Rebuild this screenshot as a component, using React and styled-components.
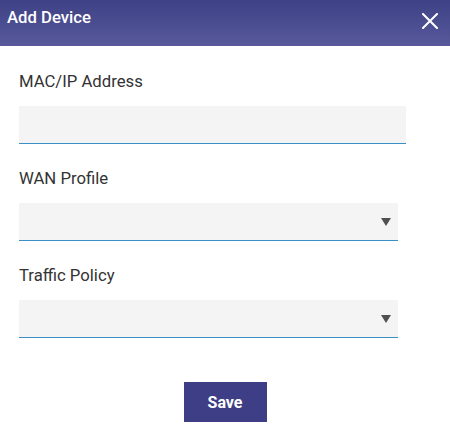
import styled, { createGlobalStyle } from "styled-components";

const GlobalStyle = createGlobalStyle`
  body {
    margin: 0;
    background: #fff;
    font-family: Roboto, "Liberation Sans", sans-serif;
  }
`;

function CloseIcon() {
  return (
    <svg width="16" height="16" viewBox="0 0 16 16">
      <path
        d="M1 1L15 15M15 1L1 15"
        stroke="#fff"
        strokeWidth="2"
        strokeLinecap="square"
      />
    </svg>
  );
}

function Field({ label, select, width }) {
  return (
    <Styled.Field>
      <Styled.Label>{label}</Styled.Label>
      <Styled.Control $width={width}>
        {select && <Styled.Caret />}
      </Styled.Control>
    </Styled.Field>
  );
}

export default function App() {
  return (
    <>
      <GlobalStyle />
      <Styled.Dialog>
        <Styled.Header>
          <Styled.Title>Add Device</Styled.Title>
          <Styled.Close>
            <CloseIcon />
          </Styled.Close>
        </Styled.Header>

        <Styled.Body>
          <Field label="MAC/IP Address" width={387} />
          <Field label="WAN Profile" width={379} select />
          <Field label="Traffic Policy" width={379} select />
          <Styled.Footer>
            <Styled.SaveButton>Save</Styled.SaveButton>
          </Styled.Footer>
        </Styled.Body>
      </Styled.Dialog>
    </>
  );
}

const Styled = {};

Styled.Dialog = styled.div`
  width: 450px;
  height: 425px;
  overflow: hidden;
  background: #fff;
`;

Styled.Header = styled.div`
  height: 46px;
  box-sizing: border-box;
  padding: 8px 12px 0 7px;
  display: flex;
  justify-content: space-between;
  align-items: flex-start;
  background: linear-gradient(to bottom, #3f4186, #57599b);
`;

Styled.Title = styled.div`
  color: #fff;
  font-size: 16.7px;
  font-weight: 500;
  line-height: 19px;
`;

Styled.Close = styled.div`
  margin-top: 5px;
  width: 16px;
  height: 16px;
  display: flex;
  cursor: pointer;
`;

Styled.Body = styled.div`
  padding: 26px 0 0 19px;
  display: flex;
  flex-direction: column;
  gap: 25px;
`;

Styled.Field = styled.div`
  display: flex;
  flex-direction: column;
  gap: 15px;
`;

Styled.Label = styled.div`
  color: #333;
  font-size: 16.7px;
  line-height: 19px;
`;

Styled.Control = styled.div`
  position: relative;
  width: ${(p) => p.$width}px;
  height: 38px;
  box-sizing: border-box;
  background: #f4f4f4;
  border-bottom: 1px solid #3a8fc4;
`;

Styled.Caret = styled.span`
  position: absolute;
  right: 7px;
  top: 15px;
  width: 0;
  height: 0;
  border-left: 5.5px solid transparent;
  border-right: 5.5px solid transparent;
  border-top: 8px solid #505050;
`;

Styled.Footer = styled.div`
  display: flex;
  justify-content: center;
  padding-top: 19px;
  padding-right: 19px;
`;

Styled.SaveButton = styled.button`
  width: 83px;
  height: 40px;
  border: none;
  background: #3e3e86;
  color: #fff;
  font-family: Roboto, "Liberation Sans", sans-serif;
  font-size: 16px;
  font-weight: 700;
  cursor: pointer;
`;
